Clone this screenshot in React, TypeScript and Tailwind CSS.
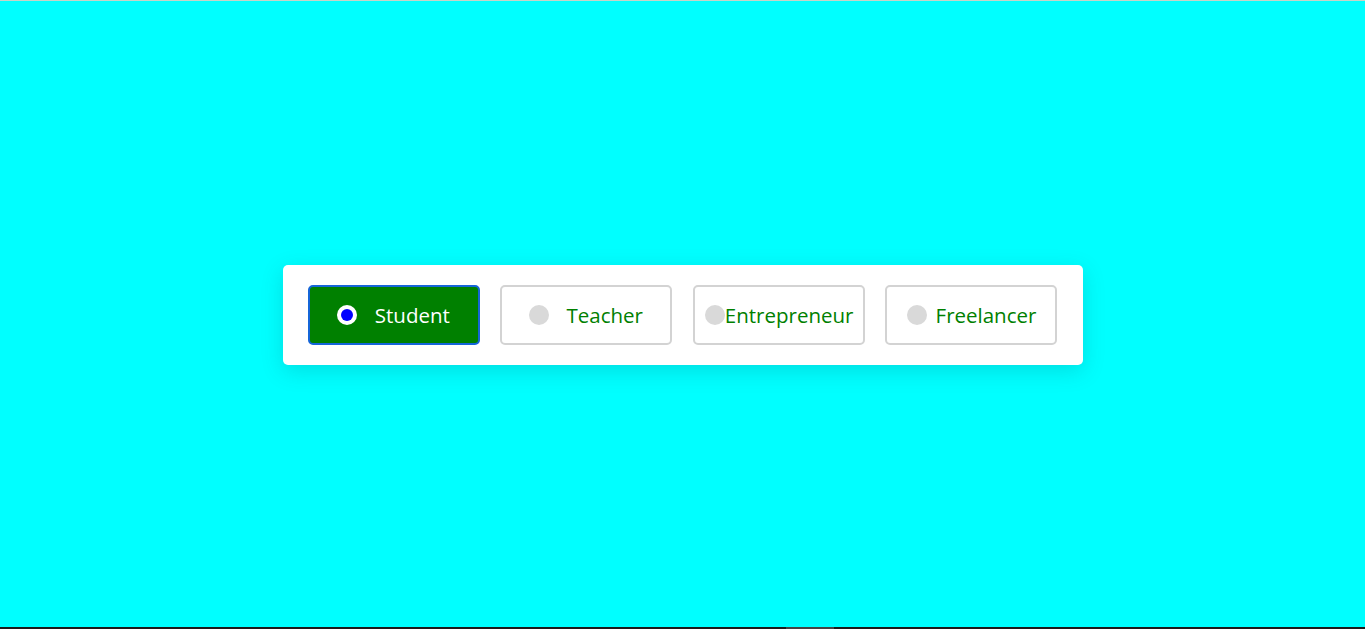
import React from "react";

const options = [
  { label: "Student", selected: true },
  { label: "Teacher", selected: false },
  { label: "Entrepreneur", selected: false },
  { label: "Freelancer", selected: false },
];

export default function App() {
  return (
    <div className="h-[629px] w-full bg-[#00ffff] flex flex-col" style={{ fontFamily: '"Open Sans", sans-serif' }}>
      <div className="h-px bg-[#c8d4c8]" />
      <div className="flex-1 flex items-center justify-center pt-[2px]">
        <div className="w-[800px] h-[100px] bg-white rounded-[5px] shadow-[0_6px_22px_rgba(0,70,90,0.18)] flex items-center justify-between px-[25px]">
          {options.map((o) => (
            <label
              key={o.label}
              className={
                o.selected
                  ? "w-[172px] h-[60px] rounded-[5px] border-2 border-[#1565d8] bg-[#008000] px-[10px] flex items-center justify-evenly text-white text-[20.5px]"
                  : "w-[172px] h-[60px] rounded-[5px] border-2 border-[#d3d3d3] bg-white px-[10px] flex items-center justify-evenly text-[#008000] text-[20.5px]"
              }
            >
              {o.selected ? (
                <span className="w-5 h-5 rounded-full bg-white flex items-center justify-center shrink-0">
                  <span className="w-3 h-3 rounded-full bg-[#0000ff]" />
                </span>
              ) : (
                <span className="w-5 h-5 rounded-full bg-[#d9d9d9] shrink-0" />
              )}
              <span className="whitespace-nowrap">{o.label}</span>
            </label>
          ))}
        </div>
      </div>
      <div className="h-[2px] bg-[#1a1a1a] flex">
        <div className="w-[786px]" />
        <div className="w-[48px] bg-[#444]" />
      </div>
    </div>
  );
}
